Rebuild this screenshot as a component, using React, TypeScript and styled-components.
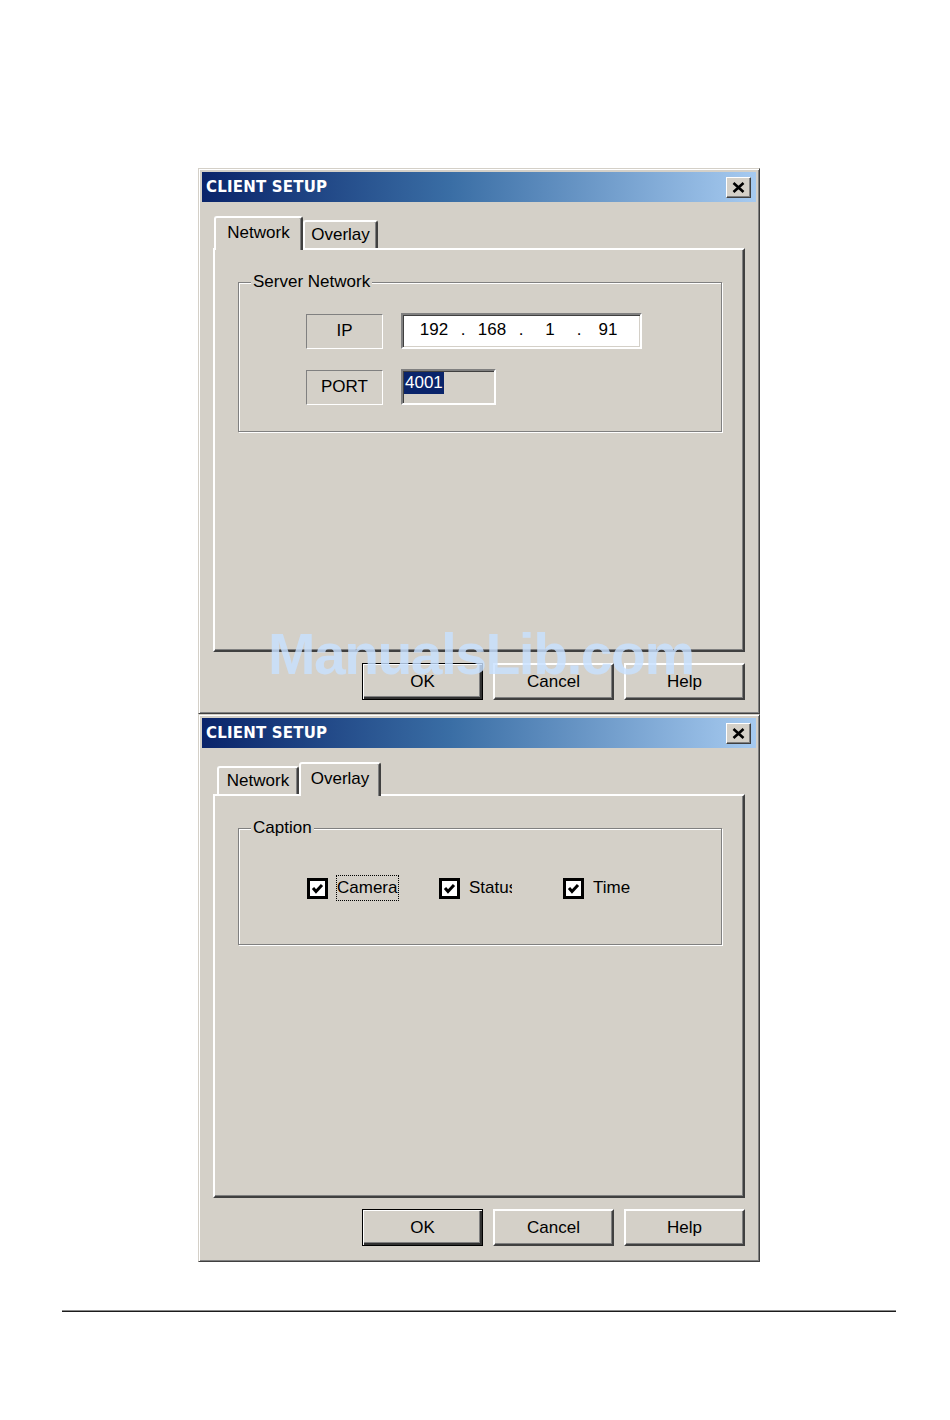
import React from 'react';
import styled, { createGlobalStyle } from 'styled-components';

const GlobalStyle = createGlobalStyle`
  html, body {
    margin: 0;
    padding: 0;
    background: #ffffff;
  }
  body {
    font-family: "Liberation Sans", Arial, sans-serif;
    font-size: 17px;
    color: #000;
  }
`;

const Page = styled.div`
  width: 950px;
  height: 1420px;
  padding-top: 168px;
  box-sizing: border-box;
`;

const Stack = styled.div`
  margin-left: 198px;
  width: 562px;
  display: flex;
  flex-direction: column;
`;

const Window = styled.div<{ $h: number }>`
  position: relative;
  box-sizing: border-box;
  height: ${p => p.$h}px;
  padding: 3px;
  background: #d4d0c8;
  border: 1px solid;
  border-color: #d4d0c8 #404040 #404040 #d4d0c8;
  box-shadow: inset 1px 1px 0 #fff, inset -1px -1px 0 #808080;
`;

const TitleBar = styled.div`
  height: 30px;
  display: flex;
  align-items: center;
  justify-content: space-between;
  padding: 0 5px 0 4px;
  background: linear-gradient(90deg, #0a246a 0%, #3a6ea5 45%, #a6caf0 100%);
`;

const Title = styled.span`
  font-family: "DejaVu Sans", Verdana, sans-serif;
  font-weight: bold;
  font-size: 15px;
  color: #fff;
  letter-spacing: 0.2px;
`;

const CloseButton = styled.div`
  box-sizing: border-box;
  width: 25px;
  height: 21px;
  display: flex;
  align-items: center;
  justify-content: center;
  background: #d4d0c8;
  border: 1px solid;
  border-color: #fff #404040 #404040 #fff;
  box-shadow: inset -1px -1px 0 #808080;
`;

const Body = styled.div`
  padding: 14px 11px 0 11px;
`;

const TabStrip = styled.div`
  position: relative;
  z-index: 1;
  height: 32px;
  display: flex;
  align-items: flex-end;
  padding-left: 1px;
`;

const Tab = styled.div<{ $w: number; $active?: boolean; $first?: boolean }>`
  box-sizing: border-box;
  width: ${p => (p.$active ? p.$w + 7 : p.$w)}px;
  height: ${p => (p.$active ? 34 : 28)}px;
  margin-left: ${p => (!p.$active && p.$first ? 3 : 0)}px;
  margin-bottom: ${p => (p.$active ? -2 : 0)}px;
  padding-bottom: ${p => (p.$active ? 2 : 0)}px;
  display: flex;
  align-items: center;
  justify-content: center;
  background: #d4d0c8;
  border-top: 2px solid #fff;
  border-left: 2px solid #fff;
  border-right: 2px solid #404040;
  border-radius: 3px 3px 0 0;
  box-shadow: inset -1px 0 0 #808080;
`;

const Panel = styled.div`
  box-sizing: border-box;
  height: 404px;
  padding: 32px 21px 0 23px;
  border: 2px solid;
  border-color: #fff #404040 #404040 #fff;
  box-shadow: inset -1px -1px 0 #808080;
`;

const GroupBox = styled.div<{ $h: number }>`
  position: relative;
  box-sizing: border-box;
  height: ${p => p.$h}px;
  border: 1px solid #808080;
  box-shadow: inset 1px 1px 0 #fff, 1px 1px 0 #fff;
`;

const GroupLabel = styled.span`
  position: absolute;
  top: -11px;
  left: 12px;
  padding: 0 2px;
  line-height: 20px;
  background: #d4d0c8;
`;

const FieldList = styled.div`
  display: flex;
  flex-direction: column;
  gap: 18px;
  padding: 29px 0 0 67px;
`;

const FieldRow = styled.div`
  display: flex;
  align-items: center;
  gap: 18px;
  height: 38px;
`;

const StaticLabel = styled.div`
  box-sizing: border-box;
  width: 77px;
  height: 35px;
  display: flex;
  align-items: center;
  justify-content: center;
  border: 1px solid;
  border-color: #808080 #fff #fff #808080;
`;

const Sunken = styled.div<{ $w: number; $bg: string }>`
  box-sizing: border-box;
  width: ${p => p.$w}px;
  height: 36px;
  background: ${p => p.$bg};
  border: 2px solid;
  border-color: #808080 #fff #fff #808080;
  box-shadow: inset 1px 1px 0 #404040, inset -1px -1px 0 #d4d0c8;
`;

const IpInner = styled.div`
  height: 100%;
  display: flex;
  align-items: center;
  padding-left: 8px;
  padding-bottom: 3px;
  box-sizing: border-box;
`;

const Octet = styled.span`
  width: 46px;
  text-align: center;
`;

const Dot = styled.span`
  width: 12px;
  text-align: center;
`;

const Selected = styled.span`
  display: inline-block;
  margin: 1px 0 0 1px;
  padding: 0 1px;
  line-height: 22px;
  background: #0a246a;
  color: #fff;
`;

const CheckRow = styled.div`
  display: flex;
  align-items: center;
  padding: 46px 0 0 68px;
`;

const CheckItem = styled.div<{ $w?: number }>`
  display: flex;
  align-items: center;
  gap: 9px;
  width: ${p => (p.$w ? `${p.$w}px` : 'auto')};
`;

const CheckBox = styled.div`
  box-sizing: border-box;
  width: 21px;
  height: 21px;
  display: flex;
  align-items: center;
  justify-content: center;
  background: #fff;
  border: 3px solid #000;
`;

const CheckText = styled.span<{ $focus?: boolean; $clip?: number }>`
  display: inline-block;
  white-space: nowrap;
  overflow: hidden;
  line-height: 22px;
  width: ${p => (p.$clip ? `${p.$clip}px` : 'auto')};
  margin-left: ${p => (p.$focus ? -1 : 0)}px;
  border: ${p => (p.$focus ? '1px dotted #000' : 'none')};
  padding: ${p => (p.$focus ? '1px 0 1px 0' : '0')};
`;

const ButtonRow = styled.div`
  display: flex;
  justify-content: flex-end;
  gap: 10px;
  margin-top: 11px;
`;

const Button = styled.div<{ $default?: boolean }>`
  box-sizing: border-box;
  width: 121px;
  height: 37px;
  display: flex;
  align-items: center;
  justify-content: center;
  background: #d4d0c8;
  border: ${p => (p.$default ? '1px solid #000' : '2px solid')};
  border-color: ${p => (p.$default ? '#000' : '#fff #404040 #404040 #fff')};
  box-shadow: ${p =>
    p.$default
      ? 'inset 1px 1px 0 #fff, inset -2px -2px 0 #303030, inset -3px -3px 0 #808080'
      : 'inset -1px -1px 0 #808080'};
`;

const Watermark = styled.div`
  position: absolute;
  top: 457px;
  left: 69px;
  z-index: 5;
  pointer-events: none;
  font-family: "Liberation Sans", Arial, sans-serif;
  font-weight: bold;
  font-size: 57px;
  line-height: 57px;
  letter-spacing: -1.5px;
  color: rgba(200, 225, 255, 0.82);
  white-space: nowrap;
`;

const Rule = styled.div`
  margin: 48px 0 0 62px;
  width: 834px;
  height: 2px;
  background: #1c1c1c;
  border-top: 1px solid #8a8a8a;
  box-sizing: border-box;
`;

const CloseIcon = () => (
  <svg width="13" height="11" viewBox="0 0 13 11">
    <path d="M1.5 1 L11.5 10 M11.5 1 L1.5 10" stroke="#000" strokeWidth="2.6" />
  </svg>
);

const CheckIcon = () => (
  <svg width="13" height="13" viewBox="0 0 13 13">
    <polyline points="2,6 5,9.5 11,3" fill="none" stroke="#000" strokeWidth="3" />
  </svg>
);

const Buttons = () => (
  <ButtonRow>
    <Button $default>OK</Button>
    <Button>Cancel</Button>
    <Button>Help</Button>
  </ButtonRow>
);

const Header = () => (
  <TitleBar>
    <Title>CLIENT SETUP</Title>
    <CloseButton>
      <CloseIcon />
    </CloseButton>
  </TitleBar>
);

const ip = ['192', '168', '1', '91'];

const NetworkDialog = () => (
  <Window $h={546}>
    <Header />
    <Body>
      <TabStrip>
        <Tab $w={82} $active>Network</Tab>
        <Tab $w={75}>Overlay</Tab>
      </TabStrip>
      <Panel>
        <GroupBox $h={150}>
          <GroupLabel>Server Network</GroupLabel>
          <FieldList>
            <FieldRow>
              <StaticLabel>IP</StaticLabel>
              <Sunken $w={241} $bg="#fff">
                <IpInner>
                  {ip.map((o, i) => (
                    <React.Fragment key={i}>
                      <Octet>{o}</Octet>
                      {i < ip.length - 1 && <Dot>.</Dot>}
                    </React.Fragment>
                  ))}
                </IpInner>
              </Sunken>
            </FieldRow>
            <FieldRow>
              <StaticLabel>PORT</StaticLabel>
              <Sunken $w={95} $bg="#d4d0c8">
                <Selected>4001</Selected>
              </Sunken>
            </FieldRow>
          </FieldList>
        </GroupBox>
      </Panel>
      <Buttons />
    </Body>
    <Watermark>ManualsLib.com</Watermark>
  </Window>
);

const OverlayDialog = () => (
  <Window $h={548}>
    <Header />
    <Body>
      <TabStrip>
        <Tab $w={82} $first>Network</Tab>
        <Tab $w={75} $active>Overlay</Tab>
      </TabStrip>
      <Panel>
        <GroupBox $h={117}>
          <GroupLabel>Caption</GroupLabel>
          <CheckRow>
            <CheckItem $w={132}>
              <CheckBox><CheckIcon /></CheckBox>
              <CheckText $focus $clip={61}>Camera</CheckText>
            </CheckItem>
            <CheckItem $w={124}>
              <CheckBox><CheckIcon /></CheckBox>
              <CheckText $clip={43}>Status</CheckText>
            </CheckItem>
            <CheckItem>
              <CheckBox><CheckIcon /></CheckBox>
              <CheckText>Time</CheckText>
            </CheckItem>
          </CheckRow>
        </GroupBox>
      </Panel>
      <Buttons />
    </Body>
  </Window>
);

export default function App() {
  return (
    <>
      <GlobalStyle />
      <Page>
        <Stack>
          <NetworkDialog />
          <OverlayDialog />
        </Stack>
        <Rule />
      </Page>
    </>
  );
}
